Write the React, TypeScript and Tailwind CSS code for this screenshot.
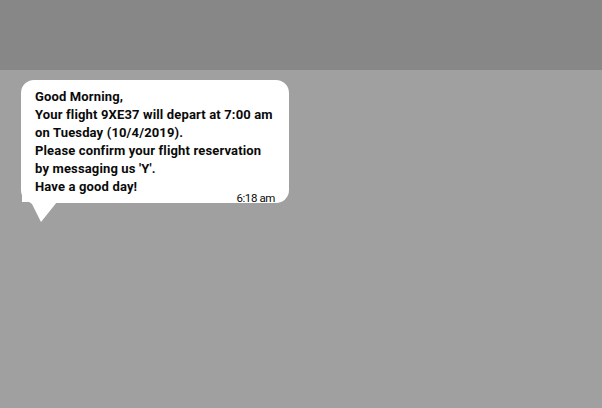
const lines = [
  "Good Morning,",
  "Your flight 9XE37 will depart at 7:00 am",
  "on Tuesday (10/4/2019).",
  "Please confirm your flight reservation",
  "by messaging us 'Y'.",
  "Have a good day!",
];

export default function App() {
  return (
    <div className="flex h-[408px] w-[602px] flex-col bg-[#a0a0a0] font-['Roboto',sans-serif]">
      <header className="h-[70px] shrink-0 bg-[#878787]" />
      <main className="flex-1 pl-[21px] pt-[10px]">
        <div className="relative w-[268px] rounded-[13px] bg-white pl-[14px] pr-[14px] pt-[8px]">
          <div className="text-[13px] font-bold leading-[18px] tracking-[0.15px] text-[#0a0a0a]">
            {lines.map((l) => (
              <div key={l} className="whitespace-nowrap">
                {l}
              </div>
            ))}
          </div>
          <div className="-mt-[3px] h-[10px] text-right text-[11.5px] leading-[10px] tracking-[-0.4px] text-[#0a0a0a]">
            6:18 am
          </div>
          <svg
            className="absolute left-0 top-0"
            width="40"
            height="145"
            viewBox="0 0 40 145"
          >
            <path d="M1 110 Q3 119 11 124 L20 142 L36 122 L1 122 Z" fill="white" />
          </svg>
        </div>
      </main>
    </div>
  );
}
